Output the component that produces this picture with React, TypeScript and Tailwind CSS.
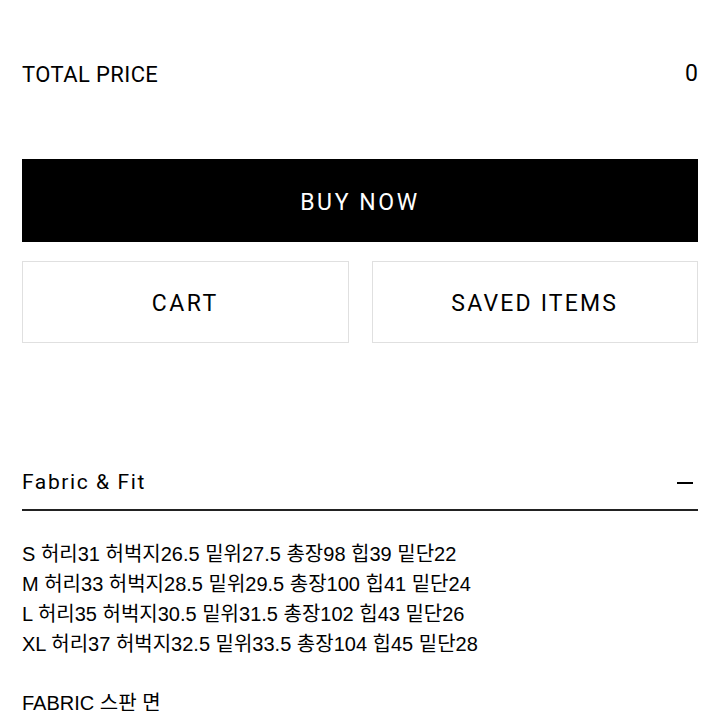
import React from "react";

const sizes = [
  "S 허리31 허벅지26.5 밑위27.5 총장98 힙39 밑단22",
  "M 허리33 허벅지28.5 밑위29.5 총장100 힙41 밑단24",
  "L 허리35 허벅지30.5 밑위31.5 총장102 힙43 밑단26",
  "XL 허리37 허벅지32.5 밑위33.5 총장104 힙45 밑단28",
];

export default function App() {
  return (
    <div
      className="w-[720px] h-[720px] overflow-hidden bg-white text-black px-[22px]"
      style={{ fontFamily: '"Liberation Sans", "Noto Sans CJK KR", sans-serif' }}
    >
      <div className="flex justify-between items-center pt-[60px] h-[88px]">
        <span className="text-[22px] tracking-[0.4px] font-[Roboto]">TOTAL PRICE</span>
        <span className="text-[23px] font-[Roboto]">0</span>
      </div>
      <div className="mt-[71px] h-[83px] bg-black text-white flex items-center justify-center pt-[5px] text-[23px] tracking-[2.6px] font-[Roboto]">
        BUY NOW
      </div>
      <div className="mt-[19px] grid grid-cols-2 gap-[23px]">
        <div className="h-[82px] border border-[#e0e0e0] flex items-center justify-center pt-[5px] text-[23px] tracking-[2.5px] font-[Roboto]">
          CART
        </div>
        <div className="h-[82px] border border-[#e0e0e0] flex items-center justify-center pt-[5px] text-[23px] tracking-[2.2px] font-[Roboto]">
          SAVED ITEMS
        </div>
      </div>
      <div className="mt-[118px] flex justify-between items-center h-[50px] border-b-2 border-[#222] pb-[4px]">
        <span className="text-[21px] tracking-[1.6px] font-[Roboto]">Fabric &amp; Fit</span>
        <span className="w-[16px] h-[2px] bg-black mr-[5px]"></span>
      </div>
      <div className="mt-[28px] text-[20px] leading-[30px]">
        {sizes.map((s) => (
          <div key={s}>{s}</div>
        ))}
        <div className="h-[30px]"></div>
        <div className="-mt-[1px]">FABRIC 스판 면</div>
      </div>
    </div>
  );
}
